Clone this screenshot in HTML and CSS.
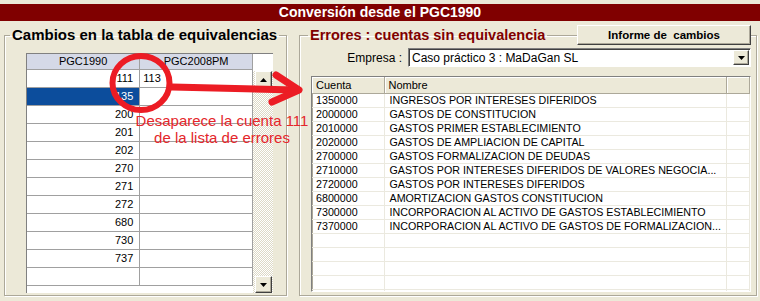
FILE: index.html
```html
<!DOCTYPE html>
<html lang="es">

<head>
    <meta charset="UTF-8">
    <meta name="viewport" content="width=device-width, initial-scale=1.0">
    <title>Conversión desde el PGC1990</title>

    <link rel="stylesheet" href="styles.css">
</head>

<body>
    <header class="title-bar">Conversión desde el PGC1990</header>

    <main class="panels">
        <fieldset class="group group-left">
            <legend>Cambios en la tabla de equivalencias</legend>

            <div class="grid-box">
                <table class="grid">
                    <thead>
                        <tr><th>PGC1990</th><th>PGC2008PM</th></tr>
                    </thead>
                    <tbody>
                        <tr><td>111</td><td>113</td></tr>
                        <tr><td class="selected">135</td><td></td></tr>
                        <tr><td>200</td><td></td></tr>
                        <tr><td>201</td><td></td></tr>
                        <tr><td>202</td><td></td></tr>
                        <tr><td>270</td><td></td></tr>
                        <tr><td>271</td><td></td></tr>
                        <tr><td>272</td><td></td></tr>
                        <tr><td>680</td><td></td></tr>
                        <tr><td>730</td><td></td></tr>
                        <tr><td>737</td><td></td></tr>
                        <tr><td></td><td></td></tr>
                    </tbody>
                </table>

                <div class="scrollbar">
                    <div class="scroll-top"></div>
                    <div class="scroll-btn">
                        <svg width="7" height="4" viewBox="0 0 7 4"><path d="M3.5 0 L7 4 L0 4 Z" fill="#000"/></svg>
                    </div>
                    <div class="scroll-track"></div>
                    <div class="scroll-btn">
                        <svg width="7" height="4" viewBox="0 0 7 4"><path d="M0 0 L7 0 L3.5 4 Z" fill="#000"/></svg>
                    </div>
                </div>
            </div>
        </fieldset>

        <fieldset class="group group-right">
            <legend>Errores : cuentas sin equivalencia</legend>

            <button class="report-btn">Informe de  cambios</button>

            <div class="company-row">
                <label for="company">Empresa :</label>
                <div class="combo" id="company">
                    <span class="combo-text">Caso práctico 3 : MaDaGan SL</span>
                    <span class="combo-btn">
                        <svg width="7" height="4" viewBox="0 0 7 4"><path d="M0 0 L7 0 L3.5 4 Z" fill="#000"/></svg>
                    </span>
                </div>
            </div>

            <div class="list-box">
                <table class="list">
                    <colgroup><col class="col-code"><col class="col-name"><col></colgroup>
                    <thead>
                        <tr><th>Cuenta</th><th>Nombre</th><th></th></tr>
                    </thead>
                    <tbody>
                        <tr><td>1350000</td><td>INGRESOS POR INTERESES DIFERIDOS</td><td></td></tr>
                        <tr><td>2000000</td><td>GASTOS DE CONSTITUCION</td><td></td></tr>
                        <tr><td>2010000</td><td>GASTOS PRIMER ESTABLECIMIENTO</td><td></td></tr>
                        <tr><td>2020000</td><td>GASTOS DE AMPLIACION DE CAPITAL</td><td></td></tr>
                        <tr><td>2700000</td><td>GASTOS FORMALIZACION DE DEUDAS</td><td></td></tr>
                        <tr><td>2710000</td><td>GASTOS POR INTERESES DIFERIDOS DE VALORES NEGOCIA...</td><td></td></tr>
                        <tr><td>2720000</td><td>GASTOS POR INTERESES DIFERIDOS</td><td></td></tr>
                        <tr><td>6800000</td><td>AMORTIZACION GASTOS CONSTITUCION</td><td></td></tr>
                        <tr><td>7300000</td><td>INCORPORACION AL ACTIVO DE GASTOS ESTABLECIMIENTO</td><td></td></tr>
                        <tr><td>7370000</td><td>INCORPORACION AL ACTIVO DE GASTOS DE FORMALIZACION...</td><td></td></tr>
                        <tr><td></td><td></td><td></td></tr>
                        <tr><td></td><td></td><td></td></tr>
                        <tr><td></td><td></td><td></td></tr>
                        <tr><td></td><td></td><td></td></tr>
                        <tr><td></td><td></td><td></td></tr>
                    </tbody>
                </table>
            </div>
        </fieldset>
    </main>

    <!-- red hand-drawn note over the window -->
    <div class="annotation">
        <svg class="marks" width="760" height="301" viewBox="0 0 760 301">
            <ellipse cx="141" cy="83" rx="28.5" ry="27" fill="none" stroke="#ec1c24" stroke-width="6"/>
            <path d="M172 87 L295 90" fill="none" stroke="#ec1c24" stroke-width="7" stroke-linecap="round"/>
            <path d="M276 75 L299 90 L272 102" fill="none" stroke="#ec1c24" stroke-width="7" stroke-linecap="round" stroke-linejoin="round"/>
        </svg>
        <p class="note">Desaparece la cuenta 111<br>de la lista de errores</p>
    </div>
</body>

</html>
```

FILE: styles.css
```css
/* Basic reset */
* {
    margin: 0;
    padding: 0;
    box-sizing: border-box;
}

body {
    font-family: "Liberation Sans", Arial, sans-serif;
    background-color: #ece9d8;
    color: #000;
    width: 760px;
    height: 301px;
    overflow: hidden;
    position: relative;
}

.title-bar {
    margin-top: 4px;
    height: 17px;
    line-height: 17px;
    background-color: #800000;
    color: #fff;
    font-size: 14px;
    font-weight: bold;
    text-align: center;
}

.panels {
    display: flex;
    gap: 12px;
    padding: 6px 0 0 4px;
}

/* group boxes */
.group {
    height: 269px;
    border: 1px solid #aca899;
    box-shadow: inset 1px 1px #fff, 1px 1px #fff;
}

.group legend {
    font-size: 15px;
    font-weight: bold;
    line-height: 16px;
    padding: 0 2px;
}

.group-left {
    width: 283px;
}

.group-left legend {
    margin-left: 5px;
}

.group-right {
    width: 458px;
}

.group-right legend {
    margin-left: 8px;
    font-size: 14.5px;
    color: #800000;
}

/* left grid */
.grid-box {
    display: flex;
    margin: 10px 0 0 21px;
    width: 247px;
    height: 240px;
    background-color: #fff;
    border-left: 1px solid #808080;
    border-top: 1px solid #808080;
}

.grid {
    width: 226px;
    border-collapse: collapse;
    table-layout: fixed;
    font-size: 11px;
    align-self: flex-start;
}

.grid th {
    height: 15px;
    background-color: #d5d9e7;
    font-weight: normal;
    border-right: 1px solid #a0a0a0;
    border-bottom: 1px solid #a0a0a0;
    line-height: 13px;
}

.grid td {
    height: 18px;
    border-right: 1px solid #a0a0a0;
    border-bottom: 1px solid #a0a0a0;
    line-height: 16px;
}

.grid td:first-child {
    text-align: right;
    padding-right: 6px;
}

.grid td:last-child {
    padding-left: 3px;
}

.grid td.selected {
    background-color: #0c4d9c;
    color: #fff;
}

.scrollbar {
    width: 20px;
    display: flex;
    flex-direction: column;
    align-items: flex-end;
    background-image: conic-gradient(#fff 25%, #ddd9c6 0 50%, #fff 0 75%, #ddd9c6 0);
    background-size: 2px 2px;
}

.scroll-top {
    width: 20px;
    height: 17px;
    background-color: #fff;
}

.scroll-track {
    flex: 1;
}

.scroll-btn {
    width: 17px;
    height: 17px;
    margin-right: 1px;
    display: flex;
    align-items: center;
    justify-content: center;
    background-color: #ece9d8;
    border: 1px solid;
    border-color: #fff #404040 #404040 #fff;
    box-shadow: inset -1px -1px #aca899;
}

/* right panel */
.report-btn {
    display: block;
    width: 174px;
    height: 20px;
    margin: -18px 5px 0 auto;
    font-family: "Liberation Sans", Arial, sans-serif;
    font-size: 11.5px;
    font-weight: bold;
    white-space: pre;
    background-color: #ece9d8;
    border: 1px solid;
    border-color: #fff #404040 #404040 #fff;
    box-shadow: inset -1px -1px #aca899;
}

.company-row {
    display: flex;
    align-items: center;
    gap: 6px;
    margin: 3px 5px 0 11px;
    font-size: 12px;
}

.company-row label {
    width: 91px;
    text-align: right;
}

.combo {
    flex: 1;
    height: 19px;
    display: flex;
    align-items: center;
    justify-content: space-between;
    background-color: #fff;
    border: 1px solid;
    border-color: #808080 #fff #fff #808080;
    box-shadow: inset 1px 1px #404040;
}

.combo-text {
    padding-left: 3px;
}

.combo-btn {
    width: 16px;
    height: 15px;
    margin-right: 1px;
    display: flex;
    align-items: center;
    justify-content: center;
    background-color: #ece9d8;
    border: 1px solid;
    border-color: #fff #404040 #404040 #fff;
    box-shadow: inset -1px -1px #aca899;
}

.list-box {
    margin: 9px 5px 0 11px;
    height: 216px;
    overflow: hidden;
    background-color: #fff;
    border: 1px solid;
    border-color: #808080 #fff #fff #808080;
    box-shadow: inset 1px 1px #aca899;
}

.list {
    width: 100%;
    border-collapse: collapse;
    table-layout: fixed;
    font-size: 10.7px;
}

.col-code {
    width: 72px;
}

.col-name {
    width: 342px;
}

.list th {
    height: 16px;
    text-align: left;
    font-weight: normal;
    font-size: 11px;
    padding-left: 4px;
    background-color: #ece9d8;
    border-right: 1px solid #aca899;
    border-bottom: 1px solid #aca899;
    box-shadow: inset 1px 1px #fff;
}

.list td {
    height: 14px;
    line-height: 13px;
    padding-left: 4px;
    white-space: nowrap;
    overflow: hidden;
    border-right: 1px solid #ebe9df;
    border-bottom: 1px solid #ebe9df;
}

.list td:nth-child(2) {
    padding-left: 5px;
}

/* annotation layer */
.annotation {
    position: absolute;
    left: 0;
    top: 0;
    width: 760px;
    height: 301px;
    pointer-events: none;
}

.marks {
    position: absolute;
    left: 0;
    top: 0;
}

.note {
    position: absolute;
    left: 122px;
    top: 112px;
    width: 200px;
    text-align: center;
    font-size: 15px;
    line-height: 17px;
    color: #e4262b;
}
```
